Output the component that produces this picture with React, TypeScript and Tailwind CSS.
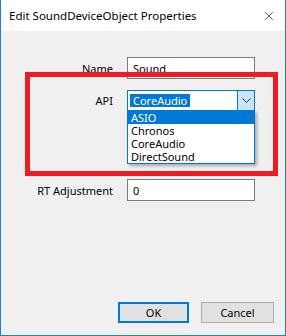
import { X } from "lucide-react";

const apiOptions = ["ASIO", "Chronos", "CoreAudio", "DirectSound"];

function Label({ text }: { text: string }) {
  return <span className="w-[112px] shrink-0 text-right">{text}</span>;
}

export default function App() {
  return (
    <div className="relative flex h-[336px] w-[286px] flex-col border-x border-b border-[#1883d7] bg-[#f0f0f0] font-['Noto_Sans',sans-serif] text-[11px] leading-none text-black">
      <div className="flex h-[31px] shrink-0 items-center justify-between bg-white pl-[8px] pr-[9px] text-[11.5px]">
        <span>Edit SoundDeviceObject Properties</span>
        <X className="size-[14px] text-[#111]" strokeWidth={1.2} />
      </div>

      <div className="flex flex-1 flex-col pt-[26px]">
        <div className="flex h-[22px] items-center gap-[14px]">
          <Label text="Name" />
          <div className="flex h-[22px] w-[128px] items-center border border-[#7a7a7a] bg-white pl-[5px]">
            Sound
          </div>
        </div>

        <div className="mt-[11px] flex h-[21px] items-center gap-[14px]">
          <Label text="API" />
          <div className="relative flex h-[21px] w-[128px] items-center border border-[#0078d7] bg-white">
            <span className="ml-[2px] flex h-[13px] items-center bg-[#0078d7] px-[3px] text-white">CoreAudio</span>
            <div className="ml-auto flex h-full w-[17px] items-center justify-center border-l border-[#0078d7] bg-[#cce4f7]">
              <svg width="9" height="5" viewBox="0 0 9 5" fill="none">
                <path d="M0.5 0.5 L4.5 4.5 L8.5 0.5" stroke="#333" strokeWidth="1" />
              </svg>
            </div>
            <ul className="absolute left-[-1px] top-[19px] z-10 w-[128px] border border-[#0078d7] bg-white text-[11px] leading-[13px] shadow-[2px_2px_3px_rgba(0,0,0,0.3)]">
              {apiOptions.map((option, index) => (
                <li
                  key={option}
                  className={`h-[13px] overflow-hidden pl-[3px] ${index === 0 ? "bg-[#0078d7] text-white" : ""}`}
                >
                  {option}
                </li>
              ))}
            </ul>
          </div>
        </div>

        <div className="mt-[68px] flex h-[22px] items-center gap-[14px]">
          <Label text="RT Adjustment" />
          <div className="flex h-[22px] w-[128px] items-center border border-[#7a7a7a] bg-white pl-[5px]">0</div>
        </div>

        <div className="mb-[12px] mt-auto flex justify-end gap-[12px] pr-[11px]">
          <button
            type="button"
            className="flex h-[21px] w-[71px] items-center justify-center border-2 border-[#0078d7] bg-[#e1e1e1]"
          >
            OK
          </button>
          <button
            type="button"
            className="flex h-[21px] w-[73px] items-center justify-center border border-[#adadad] bg-[#e1e1e1]"
          >
            Cancel
          </button>
        </div>
      </div>

      <div className="pointer-events-none absolute left-[24px] top-[72px] z-20 h-[104px] w-[253px] border-[5px] border-[#ed1c24]" />
    </div>
  );
}
